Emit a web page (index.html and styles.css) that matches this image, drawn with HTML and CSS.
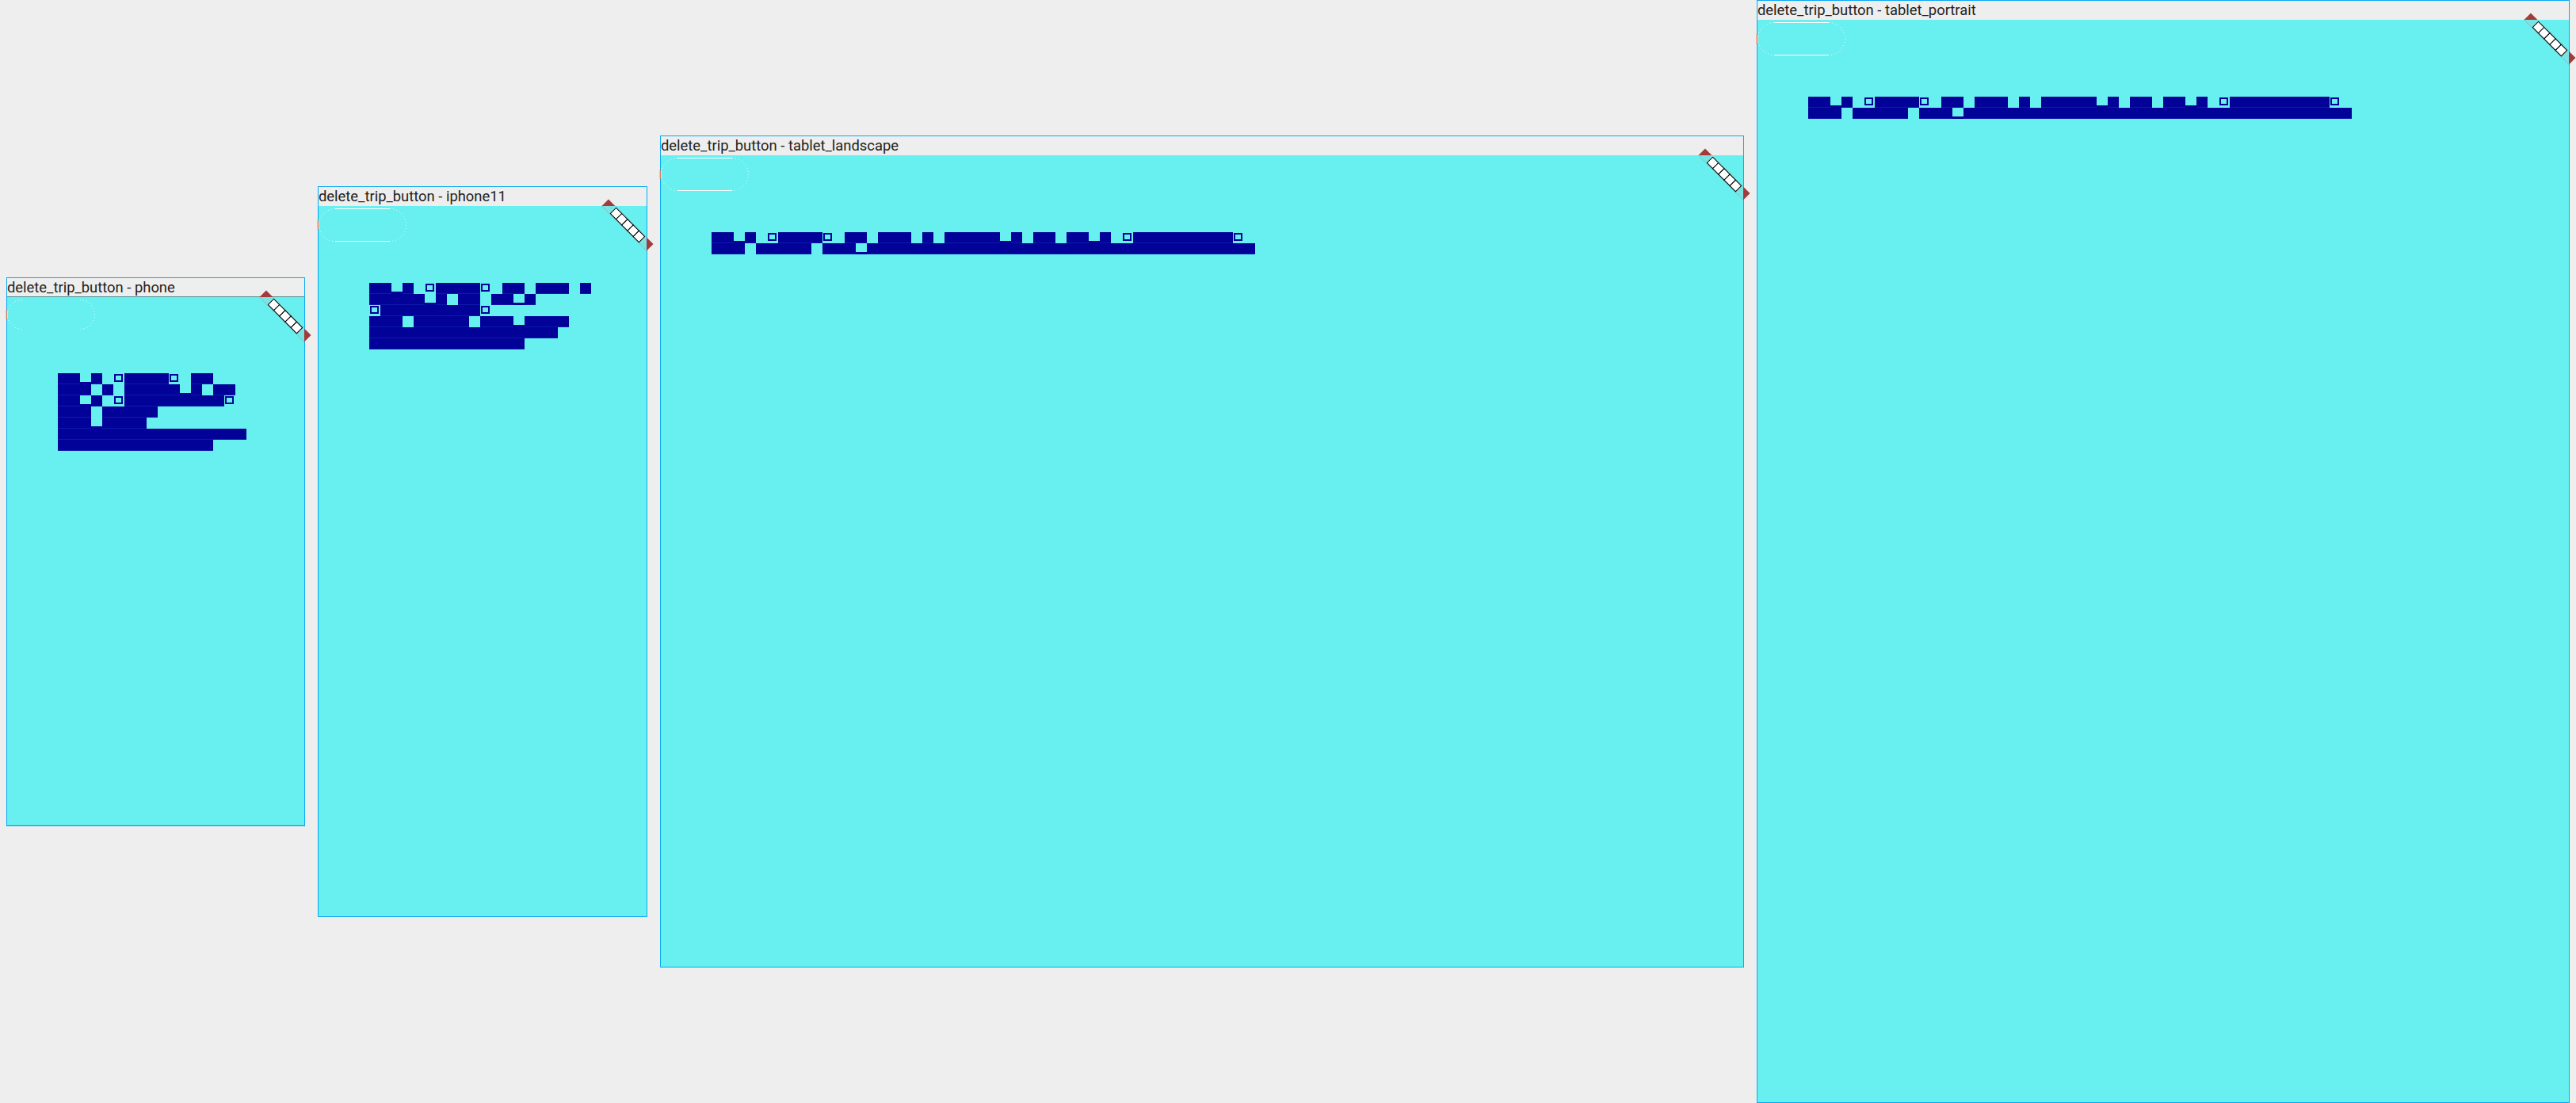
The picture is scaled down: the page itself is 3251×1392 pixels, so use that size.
FILE: index.html
```
<!DOCTYPE html>
<html lang="en">
<head>
<meta charset="utf-8">
<title>delete_trip_button goldens</title>
<link rel="stylesheet" href="styles.css">
</head>
<body>
<div class="board">

  <section class="device phone">
    <div class="label"><span>delete_trip_button - phone</span></div>
    <div class="screen">
      <svg class="btn" width="111" height="39" overflow="visible" aria-hidden="true">
        <path class="arc" d="M19 0.5A18.5 18.5 0 0 0 19 37.5M92 0.5A18.5 18.5 0 0 1 92 37.5"/>
        <rect x="-1.5" y="13" width="1.5" height="12" fill="#ff7a45" opacity=".75"/>
        <rect x="0" y="14" width="1" height="10" fill="#ffd2bd"/>
      </svg>
      <div class="msg">
        <div class="row"><i class="x"></i><i class="x"></i><i class="p"></i><i class="x"></i><i class="s"></i><i class="o"></i><i class="x"></i><i class="x"></i><i class="x"></i><i class="x"></i><i class="o"></i><i class="s"></i><i class="x"></i><i class="x"></i></div>
        <div class="row"><i class="x"></i><i class="x"></i><i class="x"></i><i class="s"></i><i class="x"></i><i class="s"></i><i class="x"></i><i class="x"></i><i class="x"></i><i class="x"></i><i class="x"></i><i class="p"></i><i class="x"></i><i class="s"></i><i class="x"></i><i class="x"></i></div>
        <div class="row"><i class="x"></i><i class="x"></i><i class="p"></i><i class="x"></i><i class="s"></i><i class="o"></i><i class="x"></i><i class="x"></i><i class="x"></i><i class="x"></i><i class="x"></i><i class="x"></i><i class="x"></i><i class="x"></i><i class="x"></i><i class="o"></i></div>
        <div class="row"><i class="x"></i><i class="x"></i><i class="x"></i><i class="s"></i><i class="x"></i><i class="x"></i><i class="x"></i><i class="x"></i><i class="x"></i></div>
        <div class="row"><i class="x"></i><i class="x"></i><i class="x"></i><i class="p"></i><i class="x"></i><i class="x"></i><i class="x"></i><i class="x"></i></div>
        <div class="row"><i class="x"></i><i class="x"></i><i class="x"></i><i class="x"></i><i class="x"></i><i class="x"></i><i class="x"></i><i class="x"></i><i class="x"></i><i class="x"></i><i class="x"></i><i class="x"></i><i class="x"></i><i class="x"></i><i class="x"></i><i class="x"></i><i class="x"></i></div>
        <div class="row"><i class="x"></i><i class="x"></i><i class="x"></i><i class="x"></i><i class="x"></i><i class="x"></i><i class="x"></i><i class="x"></i><i class="x"></i><i class="x"></i><i class="x"></i><i class="x"></i><i class="x"></i><i class="x"></i></div>
      </div>
      <svg class="banner" width="1" height="1" overflow="visible" aria-hidden="true">
        <rect x="-40" y="28" width="80" height="12" transform="rotate(45)" class="ribbon"/>
        <polygon points="-56.57,0 -39.6,0 0,39.6 0,56.57" class="ribbon-in"/>
        <g transform="rotate(45)" class="debug">
          <rect x="-25.5" y="28.9" width="10.2" height="10.2"/><rect x="-15.3" y="28.9" width="10.2" height="10.2"/><rect x="-5.1" y="28.9" width="10.2" height="10.2"/><rect x="5.1" y="28.9" width="10.2" height="10.2"/><rect x="15.3" y="28.9" width="10.2" height="10.2"/>
        </g>
      </svg>
    </div>
  </section>

  <section class="device iphone">
    <div class="label"><span>delete_trip_button - iphone11</span></div>
    <div class="screen">
      <svg class="btn" width="111" height="43" overflow="visible" aria-hidden="true">
        <path class="line" d="M21 0.5H90M21 41.5H90"/>
        <path class="arc" d="M21 0.5A20.5 20.5 0 0 0 21 41.5M90 0.5A20.5 20.5 0 0 1 90 41.5"/>
        <rect x="-1.5" y="15" width="1.5" height="12" fill="#ff7a45" opacity=".75"/>
        <rect x="0" y="16" width="1" height="10" fill="#ffd2bd"/>
      </svg>
      <div class="msg">
        <div class="row"><i class="x"></i><i class="x"></i><i class="p"></i><i class="x"></i><i class="s"></i><i class="o"></i><i class="x"></i><i class="x"></i><i class="x"></i><i class="x"></i><i class="o"></i><i class="s"></i><i class="x"></i><i class="x"></i><i class="s"></i><i class="x"></i><i class="x"></i><i class="x"></i><i class="s"></i><i class="x"></i></div>
        <div class="row"><i class="x"></i><i class="x"></i><i class="x"></i><i class="x"></i><i class="x"></i><i class="p"></i><i class="x"></i><i class="s"></i><i class="x"></i><i class="x"></i><i class="s"></i><i class="x"></i><i class="x"></i><i class="p"></i><i class="x"></i></div>
        <div class="row"><i class="o"></i><i class="x"></i><i class="x"></i><i class="x"></i><i class="x"></i><i class="x"></i><i class="x"></i><i class="x"></i><i class="x"></i><i class="x"></i><i class="o"></i></div>
        <div class="row"><i class="x"></i><i class="x"></i><i class="x"></i><i class="s"></i><i class="x"></i><i class="x"></i><i class="x"></i><i class="x"></i><i class="x"></i><i class="s"></i><i class="x"></i><i class="x"></i><i class="x"></i><i class="p"></i><i class="x"></i><i class="x"></i><i class="x"></i><i class="x"></i></div>
        <div class="row"><i class="x"></i><i class="x"></i><i class="x"></i><i class="x"></i><i class="x"></i><i class="x"></i><i class="x"></i><i class="x"></i><i class="x"></i><i class="x"></i><i class="x"></i><i class="x"></i><i class="x"></i><i class="x"></i><i class="x"></i><i class="x"></i><i class="x"></i></div>
        <div class="row"><i class="x"></i><i class="x"></i><i class="x"></i><i class="x"></i><i class="x"></i><i class="x"></i><i class="x"></i><i class="x"></i><i class="x"></i><i class="x"></i><i class="x"></i><i class="x"></i><i class="x"></i><i class="x"></i></div>
      </div>
      <svg class="banner" width="1" height="1" overflow="visible" aria-hidden="true">
        <rect x="-40" y="28" width="80" height="12" transform="rotate(45)" class="ribbon"/>
        <polygon points="-56.57,0 -39.6,0 0,39.6 0,56.57" class="ribbon-in"/>
        <g transform="rotate(45)" class="debug">
          <rect x="-25.5" y="28.9" width="10.2" height="10.2"/><rect x="-15.3" y="28.9" width="10.2" height="10.2"/><rect x="-5.1" y="28.9" width="10.2" height="10.2"/><rect x="5.1" y="28.9" width="10.2" height="10.2"/><rect x="15.3" y="28.9" width="10.2" height="10.2"/>
        </g>
      </svg>
    </div>
  </section>

  <section class="device landscape">
    <div class="label"><span>delete_trip_button - tablet_landscape</span></div>
    <div class="screen">
      <svg class="btn" width="111" height="43" overflow="visible" aria-hidden="true">
        <path class="line" d="M21 0.5H90M21 41.5H90"/>
        <path class="arc" d="M21 0.5A20.5 20.5 0 0 0 21 41.5M90 0.5A20.5 20.5 0 0 1 90 41.5"/>
        <rect x="-1.5" y="15" width="1.5" height="12" fill="#ff7a45" opacity=".75"/>
        <rect x="0" y="16" width="1" height="10" fill="#ffd2bd"/>
      </svg>
      <div class="msg">
        <div class="row"><i class="x"></i><i class="x"></i><i class="p"></i><i class="x"></i><i class="s"></i><i class="o"></i><i class="x"></i><i class="x"></i><i class="x"></i><i class="x"></i><i class="o"></i><i class="s"></i><i class="x"></i><i class="x"></i><i class="s"></i><i class="x"></i><i class="x"></i><i class="x"></i><i class="s"></i><i class="x"></i><i class="s"></i><i class="x"></i><i class="x"></i><i class="x"></i><i class="x"></i><i class="x"></i><i class="p"></i><i class="x"></i><i class="s"></i><i class="x"></i><i class="x"></i><i class="s"></i><i class="x"></i><i class="x"></i><i class="p"></i><i class="x"></i><i class="s"></i><i class="o"></i><i class="x"></i><i class="x"></i><i class="x"></i><i class="x"></i><i class="x"></i><i class="x"></i><i class="x"></i><i class="x"></i><i class="x"></i><i class="o"></i></div>
        <div class="row"><i class="x"></i><i class="x"></i><i class="x"></i><i class="s"></i><i class="x"></i><i class="x"></i><i class="x"></i><i class="x"></i><i class="x"></i><i class="s"></i><i class="x"></i><i class="x"></i><i class="x"></i><i class="p"></i><i class="x"></i><i class="x"></i><i class="x"></i><i class="x"></i><i class="x"></i><i class="x"></i><i class="x"></i><i class="x"></i><i class="x"></i><i class="x"></i><i class="x"></i><i class="x"></i><i class="x"></i><i class="x"></i><i class="x"></i><i class="x"></i><i class="x"></i><i class="x"></i><i class="x"></i><i class="x"></i><i class="x"></i><i class="x"></i><i class="x"></i><i class="x"></i><i class="x"></i><i class="x"></i><i class="x"></i><i class="x"></i><i class="x"></i><i class="x"></i><i class="x"></i><i class="x"></i><i class="x"></i><i class="x"></i><i class="x"></i></div>
      </div>
      <svg class="banner" width="1" height="1" overflow="visible" aria-hidden="true">
        <rect x="-40" y="28" width="80" height="12" transform="rotate(45)" class="ribbon"/>
        <polygon points="-56.57,0 -39.6,0 0,39.6 0,56.57" class="ribbon-in"/>
        <g transform="rotate(45)" class="debug">
          <rect x="-25.5" y="28.9" width="10.2" height="10.2"/><rect x="-15.3" y="28.9" width="10.2" height="10.2"/><rect x="-5.1" y="28.9" width="10.2" height="10.2"/><rect x="5.1" y="28.9" width="10.2" height="10.2"/><rect x="15.3" y="28.9" width="10.2" height="10.2"/>
        </g>
      </svg>
    </div>
  </section>

  <section class="device portrait">
    <div class="label"><span>delete_trip_button - tablet_portrait</span></div>
    <div class="screen">
      <svg class="btn" width="111" height="43" overflow="visible" aria-hidden="true">
        <path class="line" d="M21 0.5H90M21 41.5H90"/>
        <path class="arc" d="M21 0.5A20.5 20.5 0 0 0 21 41.5M90 0.5A20.5 20.5 0 0 1 90 41.5"/>
        <rect x="-1.5" y="15" width="1.5" height="12" fill="#ff7a45" opacity=".75"/>
        <rect x="0" y="16" width="1" height="10" fill="#ffd2bd"/>
      </svg>
      <div class="msg">
        <div class="row"><i class="x"></i><i class="x"></i><i class="p"></i><i class="x"></i><i class="s"></i><i class="o"></i><i class="x"></i><i class="x"></i><i class="x"></i><i class="x"></i><i class="o"></i><i class="s"></i><i class="x"></i><i class="x"></i><i class="s"></i><i class="x"></i><i class="x"></i><i class="x"></i><i class="s"></i><i class="x"></i><i class="s"></i><i class="x"></i><i class="x"></i><i class="x"></i><i class="x"></i><i class="x"></i><i class="p"></i><i class="x"></i><i class="s"></i><i class="x"></i><i class="x"></i><i class="s"></i><i class="x"></i><i class="x"></i><i class="p"></i><i class="x"></i><i class="s"></i><i class="o"></i><i class="x"></i><i class="x"></i><i class="x"></i><i class="x"></i><i class="x"></i><i class="x"></i><i class="x"></i><i class="x"></i><i class="x"></i><i class="o"></i></div>
        <div class="row"><i class="x"></i><i class="x"></i><i class="x"></i><i class="s"></i><i class="x"></i><i class="x"></i><i class="x"></i><i class="x"></i><i class="x"></i><i class="s"></i><i class="x"></i><i class="x"></i><i class="x"></i><i class="p"></i><i class="x"></i><i class="x"></i><i class="x"></i><i class="x"></i><i class="x"></i><i class="x"></i><i class="x"></i><i class="x"></i><i class="x"></i><i class="x"></i><i class="x"></i><i class="x"></i><i class="x"></i><i class="x"></i><i class="x"></i><i class="x"></i><i class="x"></i><i class="x"></i><i class="x"></i><i class="x"></i><i class="x"></i><i class="x"></i><i class="x"></i><i class="x"></i><i class="x"></i><i class="x"></i><i class="x"></i><i class="x"></i><i class="x"></i><i class="x"></i><i class="x"></i><i class="x"></i><i class="x"></i><i class="x"></i><i class="x"></i></div>
      </div>
      <svg class="banner" width="1" height="1" overflow="visible" aria-hidden="true">
        <rect x="-40" y="28" width="80" height="12" transform="rotate(45)" class="ribbon"/>
        <polygon points="-56.57,0 -39.6,0 0,39.6 0,56.57" class="ribbon-in"/>
        <g transform="rotate(45)" class="debug">
          <rect x="-25.5" y="28.9" width="10.2" height="10.2"/><rect x="-15.3" y="28.9" width="10.2" height="10.2"/><rect x="-5.1" y="28.9" width="10.2" height="10.2"/><rect x="5.1" y="28.9" width="10.2" height="10.2"/><rect x="15.3" y="28.9" width="10.2" height="10.2"/>
        </g>
      </svg>
    </div>
  </section>

</div>
</body>
</html>
```
FILE: styles.css
```
html, body {
  margin: 0;
  padding: 0;
  background: #eeeeee;
}

.board {
  box-sizing: border-box;
  height: 1392px;
  padding: 0 8px;
  display: flex;
  align-items: center;
  gap: 16px;
}

.device {
  flex: none;
  border: 1px solid #08a9f3;
  background: #eeeeee;
}

.label {
  height: 24px;
  font-family: Roboto, "Liberation Sans", sans-serif;
  font-size: 18.4px;
  line-height: 23px;
  color: #222222;
  white-space: nowrap;
}

.label span {
  display: block;
}

.screen {
  position: relative;
  box-sizing: border-box;
  background: #68efef;
  padding-top: 3px;
}

.phone .screen { width: 375px; height: 667px; }
.iphone .screen { width: 414px; height: 896px; }
.landscape .screen { width: 1366px; height: 1024px; }
.portrait .screen { width: 1024px; height: 1366px; }

.phone .label { box-shadow: inset 0 -1px 0 #4c8f90; }
.phone .screen { box-shadow: inset 0 -1px 0 #4c8f90; }
.phone { border-bottom-color: #8cd3f7; }

.btn {
  display: block;
  overflow: visible;
}

.btn .line {
  fill: none;
  stroke: #ffffff;
  stroke-width: 1;
}

.btn .arc {
  fill: none;
  stroke: #ffffff;
  stroke-width: 1;
  stroke-dasharray: 1 3;
}

.msg {
  margin-left: 64px;
  margin-top: 51px;
}

.phone .msg { margin-top: 54px; }

.row {
  display: flex;
  height: 14px;
}

.row i {
  flex: none;
  position: relative;
  width: 14px;
  height: 14px;
}

.row .x {
  background: #020299;
  box-shadow: inset 0 -1px 0 rgba(40, 90, 215, 0.28);
}

.row .p::after {
  content: "";
  position: absolute;
  left: 0;
  right: 0;
  bottom: 0;
  height: 3px;
  background: #020299;
}

.row .o::after {
  content: "";
  position: absolute;
  left: 1px;
  top: 1px;
  width: 11px;
  height: 10px;
  box-sizing: border-box;
  border: 2px solid #020299;
}

.banner {
  position: absolute;
  top: 0;
  left: 100%;
  overflow: visible;
}

.ribbon { fill: #a23b3b; }
.ribbon-in { fill: #79e4e4; }
.debug rect {
  fill: #ffffff;
  stroke: #000000;
  stroke-width: 1;
}
```
